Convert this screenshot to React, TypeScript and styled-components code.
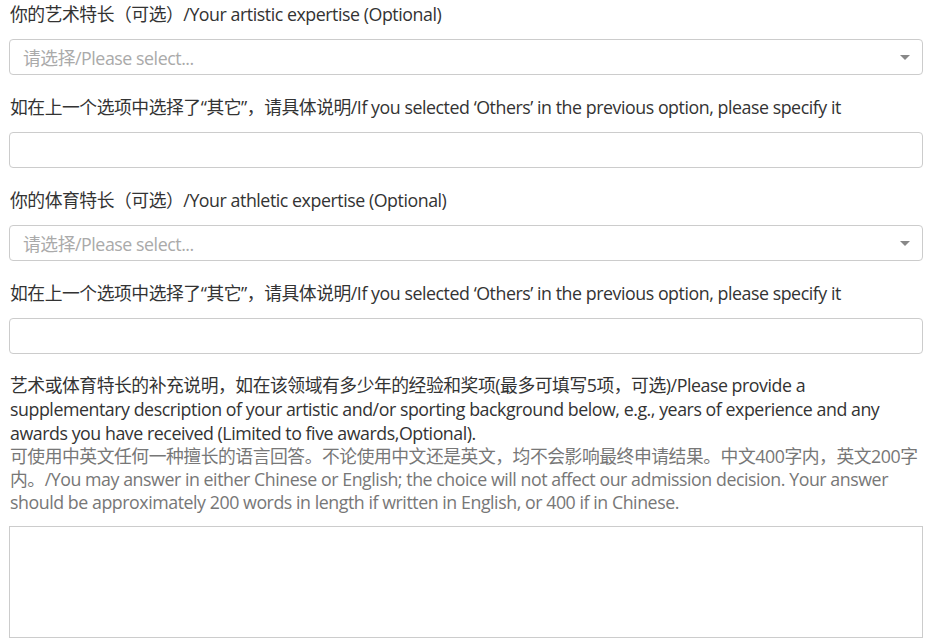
import { createGlobalStyle, styled } from 'styled-components'

const GlobalStyle = createGlobalStyle`
  html, body {
    margin: 0;
    padding: 0;
    background: #fff;
  }
  body {
    font-family: "Open Sans", "Noto Sans CJK SC", sans-serif;
    color: #333;
  }
`

const Form = styled.div`
  width: 914px;
  padding: 2px 0 0 9px;
`

const Group = styled.div<{ $gap?: number }>`
  margin-bottom: ${p => p.$gap ?? 20}px;
`

const Label = styled.div`
  font-size: 17.8px;
  line-height: 24px;
  color: #333;
  padding-left: 1px;
  margin-bottom: 13px;
  letter-spacing: -0.45px;
`

// long label whose lines break where the original form breaks them
const LongLabel = styled(Label)`
  white-space: nowrap;
  margin-top: -1px;
  margin-bottom: 12px;
`

const Hint = styled.span`
  display: block;
  color: #777;
  line-height: 23px;
`

const SelectBox = styled.div`
  position: relative;
  box-sizing: border-box;
  height: 36px;
  border: 1px solid #ccc;
  border-radius: 4px;
  padding: 0 30px 0 13px;
  display: flex;
  align-items: center;
  font-size: 17.8px;
  letter-spacing: -0.45px;
  color: #aaa;
  cursor: pointer;
  &::after {
    content: '';
    position: absolute;
    right: 12px;
    top: 15px;
    border-width: 5px 5px 0 5px;
    border-style: solid;
    border-color: #888 transparent transparent transparent;
  }
`

const TextInput = styled.input`
  display: block;
  box-sizing: border-box;
  width: 100%;
  height: 36px;
  border: 1px solid #ccc;
  border-radius: 4px;
  padding: 0 12px;
  font-size: 16px;
  font-family: inherit;
  outline: none;
`

const TextArea = styled.textarea`
  display: block;
  box-sizing: border-box;
  width: 100%;
  height: 112px;
  border: 1px solid #ccc;
  border-radius: 0;
  padding: 8px 12px;
  font-size: 16px;
  font-family: inherit;
  resize: none;
  outline: none;
`

const OTHERS_LABEL = '如在上一个选项中选择了“其它”，请具体说明/If you selected ‘Others’ in the previous option, please specify it'

export default function App() {
  return (
    <>
      <GlobalStyle />
      <Form>
        <Group>
          <Label>你的艺术特长（可选）/Your artistic expertise (Optional)</Label>
          <SelectBox>请选择/Please select...</SelectBox>
        </Group>
        <Group>
          <Label>{OTHERS_LABEL}</Label>
          <TextInput />
        </Group>
        <Group>
          <Label>你的体育特长（可选）/Your athletic expertise (Optional)</Label>
          <SelectBox>请选择/Please select...</SelectBox>
        </Group>
        <Group>
          <Label>{OTHERS_LABEL}</Label>
          <TextInput />
        </Group>
        <Group $gap={0}>
          <LongLabel>
            艺术或体育特长的补充说明，如在该领域有多少年的经验和奖项(最多可填写5项，可选)/Please provide a<br />
            supplementary description of your artistic and/or sporting background below, e.g., years of experience and any<br />
            awards you have received (Limited to five awards,Optional).
            <Hint>
              可使用中英文任何一种擅长的语言回答。不论使用中文还是英文，均不会影响最终申请结果。中文400字内，英文200字<br />
              内。/You may answer in either Chinese or English; the choice will not affect our admission decision. Your answer<br />
              should be approximately 200 words in length if written in English, or 400 if in Chinese.
            </Hint>
          </LongLabel>
          <TextArea />
        </Group>
      </Form>
    </>
  )
}
